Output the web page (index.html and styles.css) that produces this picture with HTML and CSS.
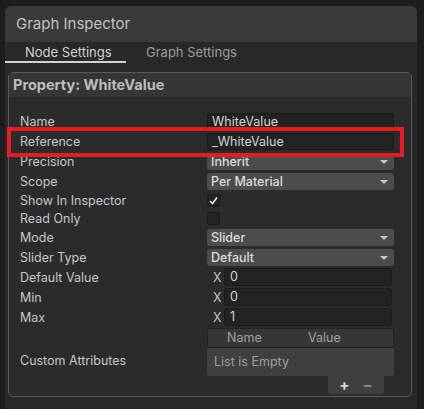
FILE: index.html
```html
<!DOCTYPE html>
<html>
<head>
<meta charset="utf-8">
<link rel="stylesheet" href="styles.css">
</head>
<body>
<div class="panel">
  <div class="title">Graph Inspector</div>
  <div class="tabs">
    <div class="tab active">Node Settings</div>
    <div class="tab">Graph Settings</div>
  </div>
  <div class="box">
    <div class="prop-head">Property: WhiteValue</div>
    <div class="rows">
      <div class="row"><div class="label">Name</div><div class="field text">WhiteValue</div></div>
      <div class="row"><div class="label">Reference</div><div class="field text">_WhiteValue</div></div>
      <div class="row"><div class="label">Precision</div><div class="field drop">Inherit<span class="arrow"></span></div></div>
      <div class="row"><div class="label">Scope</div><div class="field drop">Per Material<span class="arrow"></span></div></div>
      <div class="row short"><div class="label">Show In Inspector</div><div class="check"><svg width="11" height="11" viewBox="0 0 11 11"><polyline points="2,6 4.5,8.5 9,2.5" fill="none" stroke="#e8e8e8" stroke-width="1.6"/></svg></div></div>
      <div class="row short"><div class="label">Read Only</div><div class="check"></div></div>
      <div class="row"><div class="label">Mode</div><div class="field drop">Slider<span class="arrow"></span></div></div>
      <div class="row"><div class="label">Slider Type</div><div class="field drop">Default<span class="arrow"></span></div></div>
      <div class="row"><div class="label">Default Value</div><div class="vec"><span class="x">X</span><div class="field text num">0</div></div></div>
      <div class="row"><div class="label">Min</div><div class="vec"><span class="x">X</span><div class="field text num">0</div></div></div>
      <div class="row"><div class="label">Max</div><div class="vec"><span class="x">X</span><div class="field text num">1</div></div></div>
      <div class="row list-row">
        <div class="label">Custom Attributes</div>
        <div class="list">
          <div class="list-head"><span class="col-name">Name</span><span class="col-value">Value</span></div>
          <div class="list-body">List is Empty</div>
          <div class="list-foot"><span class="btn">+</span><span class="btn minus">−</span></div>
        </div>
      </div>
    </div>
  </div>
</div>
<div class="highlight"></div>
</body>
</html>
```
FILE: styles.css
```css
html, body {
  margin: 0;
  padding: 0;
  background: #1d1d1d;
  height: 409px;
  overflow: hidden;
  font-family: Inter, "Noto Sans", sans-serif;
}
body { position: relative; }
.panel {
  margin: 6px 0 0 5px;
  width: 412px;
  height: 403px;
  background: #282828;
  border-radius: 6px 6px 0 0;
  overflow: hidden;
}
.title {
  height: 36px;
  line-height: 36px;
  background: #393939;
  color: #c2c2c2;
  font-size: 15px;
  padding-left: 11px;
}
.tabs {
  display: flex;
  height: 21px;
}
.tab {
  font-size: 13px;
  color: #9c9c9c;
  line-height: 20px;
  padding-left: 20px;
  width: 101px;
}
.tab.active {
  color: #d4d4d4;
  border-bottom: 2px solid #d2d2d2;
  height: 19px;
}
.box {
  margin: 9px 0 0 3px;
  width: 402px;
  height: 323px;
  border: 1px solid #595959;
  border-radius: 5px;
  background: #2b2b2b;
  overflow: hidden;
}
.prop-head {
  height: 24px;
  line-height: 24px;
  background: #353535;
  color: #bdbdbd;
  font-weight: 700;
  font-size: 14.5px;
  padding-left: 4px;
}
.rows {
  padding: 14px 17px 0 11px;
}
.row {
  display: flex;
  align-items: center;
  height: 20px;
}
.row.short { height: 18px; }
.label {
  width: 187px;
  flex: none;
  font-size: 12.5px;
  color: #c6c6c6;
}
.field {
  flex: 1;
  height: 17px;
  box-sizing: border-box;
  border-radius: 3px;
  font-size: 12.5px;
  line-height: 17px;
  padding-left: 4px;
  position: relative;
}
.text {
  background: #222222;
  border: 1px solid #1a1a1a;
  color: #d4d4d4;
  line-height: 15px;
}
.drop {
  background: #4c4c4c;
  color: #dcdcdc;
  font-weight: 500;
}
.arrow {
  position: absolute;
  right: 6px;
  top: 7px;
  width: 0;
  height: 0;
  border-left: 4px solid transparent;
  border-right: 4px solid transparent;
  border-top: 4px solid #c8c8c8;
}
.check {
  width: 13px;
  height: 13px;
  box-sizing: border-box;
  background: #222222;
  border: 1px solid #1a1a1a;
  border-radius: 2px;
  display: flex;
  align-items: center;
  justify-content: center;
}
.check svg { display: block; }
.vec {
  flex: 1;
  display: flex;
  align-items: center;
  padding-right: 2px;
}
.x {
  width: 17px;
  padding-left: 6px;
  box-sizing: border-box;
  font-size: 12.5px;
  color: #c6c6c6;
  flex: none;
}
.num { height: 18px; line-height: 16px; padding-left: 5px; }
.list-row {
  height: 67px;
  align-items: flex-start;
}
.list-row .label { margin-top: 26px; }
.list {
  flex: 1;
  margin-top: 1px;
  display: flex;
  flex-direction: column;
}
.list-head {
  height: 18px;
  background: #363636;
  border: 1px solid #222;
  border-bottom: 1px solid #1c1c1c;
  border-radius: 3px 3px 0 0;
  font-size: 12.5px;
  color: #a2a2a2;
  line-height: 18px;
  display: flex;
}
.col-name { margin-left: 19px; width: 81px; }
.list-body {
  height: 28px;
  background: #3f3f3f;
  border-radius: 0 0 3px 3px;
  font-size: 12.5px;
  color: #9e9e9e;
  line-height: 28px;
  padding-left: 7px;
}
.list-foot {
  align-self: flex-end;
  margin-right: 10px;
  width: 56px;
  height: 18px;
  background: #3f3f3f;
  border-radius: 0 0 3px 3px;
  display: flex;
  align-items: center;
  justify-content: center;
  gap: 13px;
}
.btn {
  font-size: 15px;
  font-weight: 700;
  color: #d8d8d8;
  line-height: 18px;
}
.btn.minus { color: #8a8a8a; }
.highlight {
  position: absolute;
  left: 7px;
  top: 127px;
  width: 397px;
  height: 30px;
  box-sizing: border-box;
  border: 4px solid #e51c23;
  pointer-events: none;
}
```
